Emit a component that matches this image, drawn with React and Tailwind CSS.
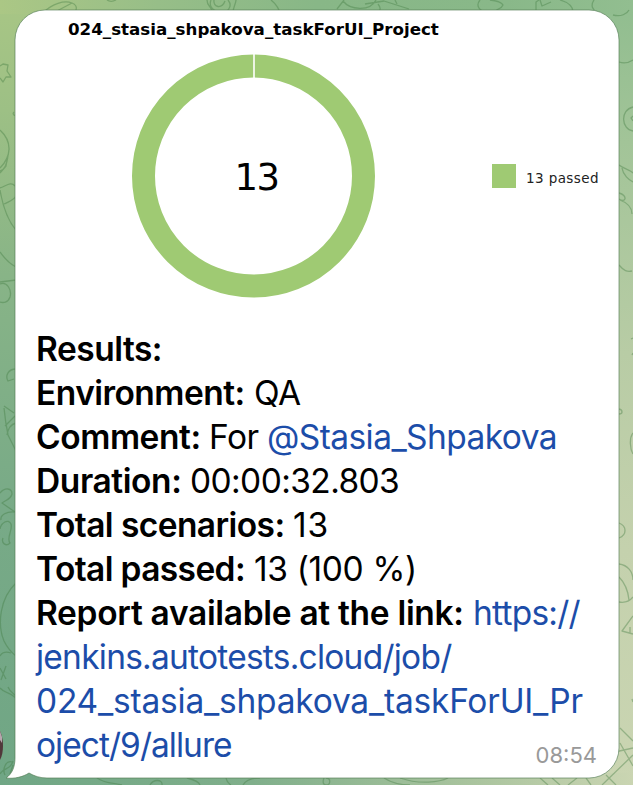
const doodles = [
  // top edge
  "M44 12 C52 4 64 0 72 3 C79 6 77 12 70 16 M55 12 L72 3",
  "M107 0 C110 2 114 1 116 0",
  "M207 0 C207 7 212 6 212 12 M228 0 C233 6 228 14 219 12 C211 10 209 5 211 0 M214 0 C213 8 222 9 225 1 M233 12 C233 8 236 3 236 0 M271 0 C276 4 279 8 280 14",
  "M337 9 L344 0 M343 1 C350 10 370 12 376 0 M365 4 L384 1 L409 9 M378 4 C381 8 380 8 380 10 M395 0 L397 4",
  "M480 0 C475 6 480 11 486 12 M490 0 C500 1 502 3 503 5 C500 11 498 7 495 12",
  "M536 10 L536 2 L539 0 M540 0 L542 6 L551 2 M560 0 C567 2 573 5 573 12",
  "M594 0 C590 6 593 10 597 12 M613 15 C621 17 627 14 629 10",
  // left edge
  "M0 66 L3 64 L8 65 L7 71 L11 77 L6 77 L3 82 L0 78",
  "M14 112 C12 114 14 116 16 115",
  "M0 130 C13 142 11 157 0 168 M8 155 C7 165 4 170 0 171 M7 160 L6 166 L0 173",
  "M0 188 C6 186 11 181 15 186 M0 190 C3 207 9 222 16 230 M4 204 C10 201 14 200 16 196 M0 252 C5 259 10 264 16 267",
  "M0 282 L16 280 M0 284 C7 281 12 290 10 297 C8 303 3 303 0 302",
  "M16 369 C8 369 5 376 8 381 L14 379",
  "M4 406 L14 413 M4 408 C5 418 6 425 8 435 L16 451 M5 426 L15 416 M7 435 C8 428 12 424 16 423",
  "M0 493 C5 487 12 488 12 494 C11 499 6 500 2 503 L15 512 M15 512 C7 511 0 515 1 520 M0 529 C1 523 8 518 11 524 C13 530 6 538 10 543 C6 547 1 543 3 538",
  "M16 583 C0 598 -3 624 4 641 C8 649 12 653 16 656 M0 656 C3 651 8 652 11 653 M0 668 L6 679 M1 680 L6 666 M8 687 C10 692 13 693 16 696",
  "M0 688 C5 694 9 691 16 698",
  "M12 762 C6 760 2 769 5 775 M13 765 L9 777 M0 774 C4 767 11 770 13 761",
  // right edge
  "M619 62 C625 64 630 62 633 60 M633 107 C620 110 621 129 633 131 M633 116 L631 118 L633 121",
  "M619 165 C624 169 629 169 633 173 M622 168 C623 175 629 180 633 182 M619 193 C628 195 626 204 619 199 M620 200 C628 203 632 207 632 214",
  "M619 265 C624 271 627 272 632 271 M633 338 L631 339 M633 353 L632 355",
  "M619 409 C623 410 623 414 619 414 M633 433 C629 438 630 449 633 454",
  "M619 523 C627 526 627 535 619 538 M619 564 C628 565 633 572 633 580 M619 577 C625 583 628 590 629 600 M619 602 C625 603 630 601 633 597",
  "M633 616 L622 631 L633 634 M630 627 L630 633",
  "M632 699 L633 702 M620 728 L633 741 M615 752 L633 748 M620 743 L633 766 M606 775 L616 785 M633 755 L602 785",
  // bottom edge
  "M97 778 C106 784 110 782 122 785 M150 785 C153 779 163 779 162 785 M187 778 C195 780 199 782 200 785 M226 778 C227 782 229 784 231 785 M243 785 C246 780 252 778 260 778",
  "M324 778 C322 783 324 785 326 785 C331 785 331 778 326 778 M384 778 C392 783 402 785 410 785 M400 778 C420 785 440 782 448 778",
  "M540 778 L548 785 M552 778 L560 785 M568 785 L577 778 M586 778 L591 785",
];

const runs = [
  [{ b: true, t: "Results:", c: "w-[128px] tracking-[-0.5px]" }],
  [{ b: true, t: "Environment:", c: "w-[218px] tracking-[-0.54px]" }, { t: "QA", c: "tracking-[-0.5px]" }],
  [
    { b: true, t: "Comment:", c: "w-[173px] tracking-[-0.45px]" },
    { t: "For", c: "w-[58px] tracking-[-0.5px]" },
    { t: "@Stasia_Shpakova", link: true, c: "tracking-[-0.57px]" },
  ],
  [{ b: true, t: "Duration:", c: "w-[154px] tracking-[-0.4px]" }, { t: "00:00:32.803", c: "tracking-[-0.6px]" }],
  [{ b: true, t: "Total scenarios:", c: "w-[257px] tracking-[-0.57px]" }, { t: "13", c: "tracking-[0.8px]" }],
  [{ b: true, t: "Total passed:", c: "w-[218px] tracking-[-0.62px]" }, { t: "13 (100 %)", c: "tracking-[-0.35px]" }],
  [
    { b: true, t: "Report available at the link:", c: "w-[437px] tracking-[-0.31px]" },
    { t: "https://", link: true, c: "tracking-[-0.75px]" },
  ],
  [{ t: "jenkins.autotests.cloud/job/", link: true, c: "tracking-[-0.76px]" }],
  [{ t: "024_stasia_shpakova_taskForUI_Pr", link: true, c: "tracking-[-0.22px]" }],
  [{ t: "oject/9/allure", link: true, c: "tracking-[-0.97px]" }],
];

function Wallpaper() {
  return (
    <svg className="absolute inset-0" width="633" height="785" viewBox="0 0 633 785">
      <defs>
        <linearGradient id="top" x1="0" x2="1" y1="0" y2="0">
          <stop offset="0" stopColor="#abc785" />
          <stop offset=".25" stopColor="#97be88" />
          <stop offset=".5" stopColor="#88b787" />
          <stop offset=".8" stopColor="#89b889" />
          <stop offset="1" stopColor="#92be90" />
        </linearGradient>
        <linearGradient id="left" x1="0" x2="0" y1="0" y2="1">
          <stop offset="0" stopColor="#a8c685" />
          <stop offset=".14" stopColor="#9dc085" />
          <stop offset=".35" stopColor="#88b487" />
          <stop offset=".65" stopColor="#78aa87" />
          <stop offset="1" stopColor="#70a685" />
        </linearGradient>
        <linearGradient id="right" x1="0" x2="0" y1="0" y2="1">
          <stop offset="0" stopColor="#90bd8f" />
          <stop offset=".18" stopColor="#a2c498" />
          <stop offset=".45" stopColor="#b8cca5" />
          <stop offset=".7" stopColor="#c4d1ad" />
          <stop offset="1" stopColor="#cad5b2" />
        </linearGradient>
        <linearGradient id="bottom" x1="0" x2="1" y1="0" y2="0">
          <stop offset="0" stopColor="#70a685" />
          <stop offset=".4" stopColor="#80af8b" />
          <stop offset=".75" stopColor="#aac49e" />
          <stop offset="1" stopColor="#cad5b2" />
        </linearGradient>
      </defs>
      <rect width="40" height="785" fill="url(#left)" />
      <rect x="590" width="43" height="785" fill="url(#right)" />
      <rect width="633" height="14" fill="url(#top)" />
      <rect y="773" width="633" height="12" fill="url(#bottom)" />
      <g fill="none" stroke="#3f7940" strokeOpacity=".38" strokeWidth="1.3" strokeLinejoin="round">
        {doodles.map((d) => <path key={d} d={d} />)}
      </g>
      <path d="M0 731 C4 739 4 753 0 760Z" fill="#51383b" />
      <path d="M0 731 L2 737 L2 743 L0 740Z" fill="#b6a6ae" />
      <path
        d="M45 10 H589 A30 30 0 0 1 619 40 V748 A30 30 0 0 1 589 778 H47 C40 778 34 776 29 773 C23 777 14 779 6 778 C12 774 15 767 15 758 V40 A30 30 0 0 1 45 10Z"
        fill="#fff" stroke="#537d54" strokeOpacity=".65" strokeWidth="1"
      />
    </svg>
  );
}

export default function App() {
  return (
    <main className="relative h-[785px] w-[633px] overflow-hidden bg-[#88b787]">
      <Wallpaper />
      <article className="relative ml-[15px] flex h-[778px] w-[604px] flex-col pt-[10px]">
        <section className="h-[317px] font-['DejaVu_Sans',sans-serif]">
          <h1 className="h-[38px] pl-[53px] pt-[7px] text-[16.7px] font-bold leading-6 whitespace-nowrap text-black">
            024_stasia_shpakova_taskForUI_Project
          </h1>
          <div className="flex items-center pl-[116px] pt-[6px]">
            <div className="grid h-[244px] w-[246px] shrink-0 place-items-center">
              <svg className="col-start-1 row-start-1" width="246" height="244" viewBox="0 0 246 244">
                <circle cx="122.5" cy="122" r="110" fill="none" stroke="#9fca73" strokeWidth="23" />
                <path d="M123 0V24" stroke="#fff" strokeWidth="1.6" />
              </svg>
              <span className="col-start-1 row-start-1 pl-[5px] pt-[3px] text-[37px] leading-none tracking-[-1.5px] text-black">13</span>
            </div>
            <div className="ml-[115px] flex items-center gap-[10px]">
              <i className="size-6 bg-[#9fca73]" />
              <span className="pt-[3px] text-[13.5px] leading-5 tracking-[0.4px] whitespace-nowrap text-[#222]">13 passed</span>
            </div>
          </div>
        </section>
        <section className="pl-[21px] font-['Inter',sans-serif] text-[33.5px] leading-[44px] text-black">
          {runs.map((line, i) => (
            <p key={i} className="flex h-11 whitespace-nowrap">
              {line.map((r) => (
                <span key={r.t} className={`shrink-0 ${r.b ? "font-semibold" : "font-normal"} ${r.link ? "text-[#1c4da9]" : ""} ${r.c || ""}`}>{r.t}</span>
              ))}
            </p>
          ))}
        </section>
        <time className="absolute right-[22px] bottom-[8px] font-['Inter',sans-serif] text-[22px] leading-[30px] text-[#999]">08:54</time>
      </article>
    </main>
  );
}
